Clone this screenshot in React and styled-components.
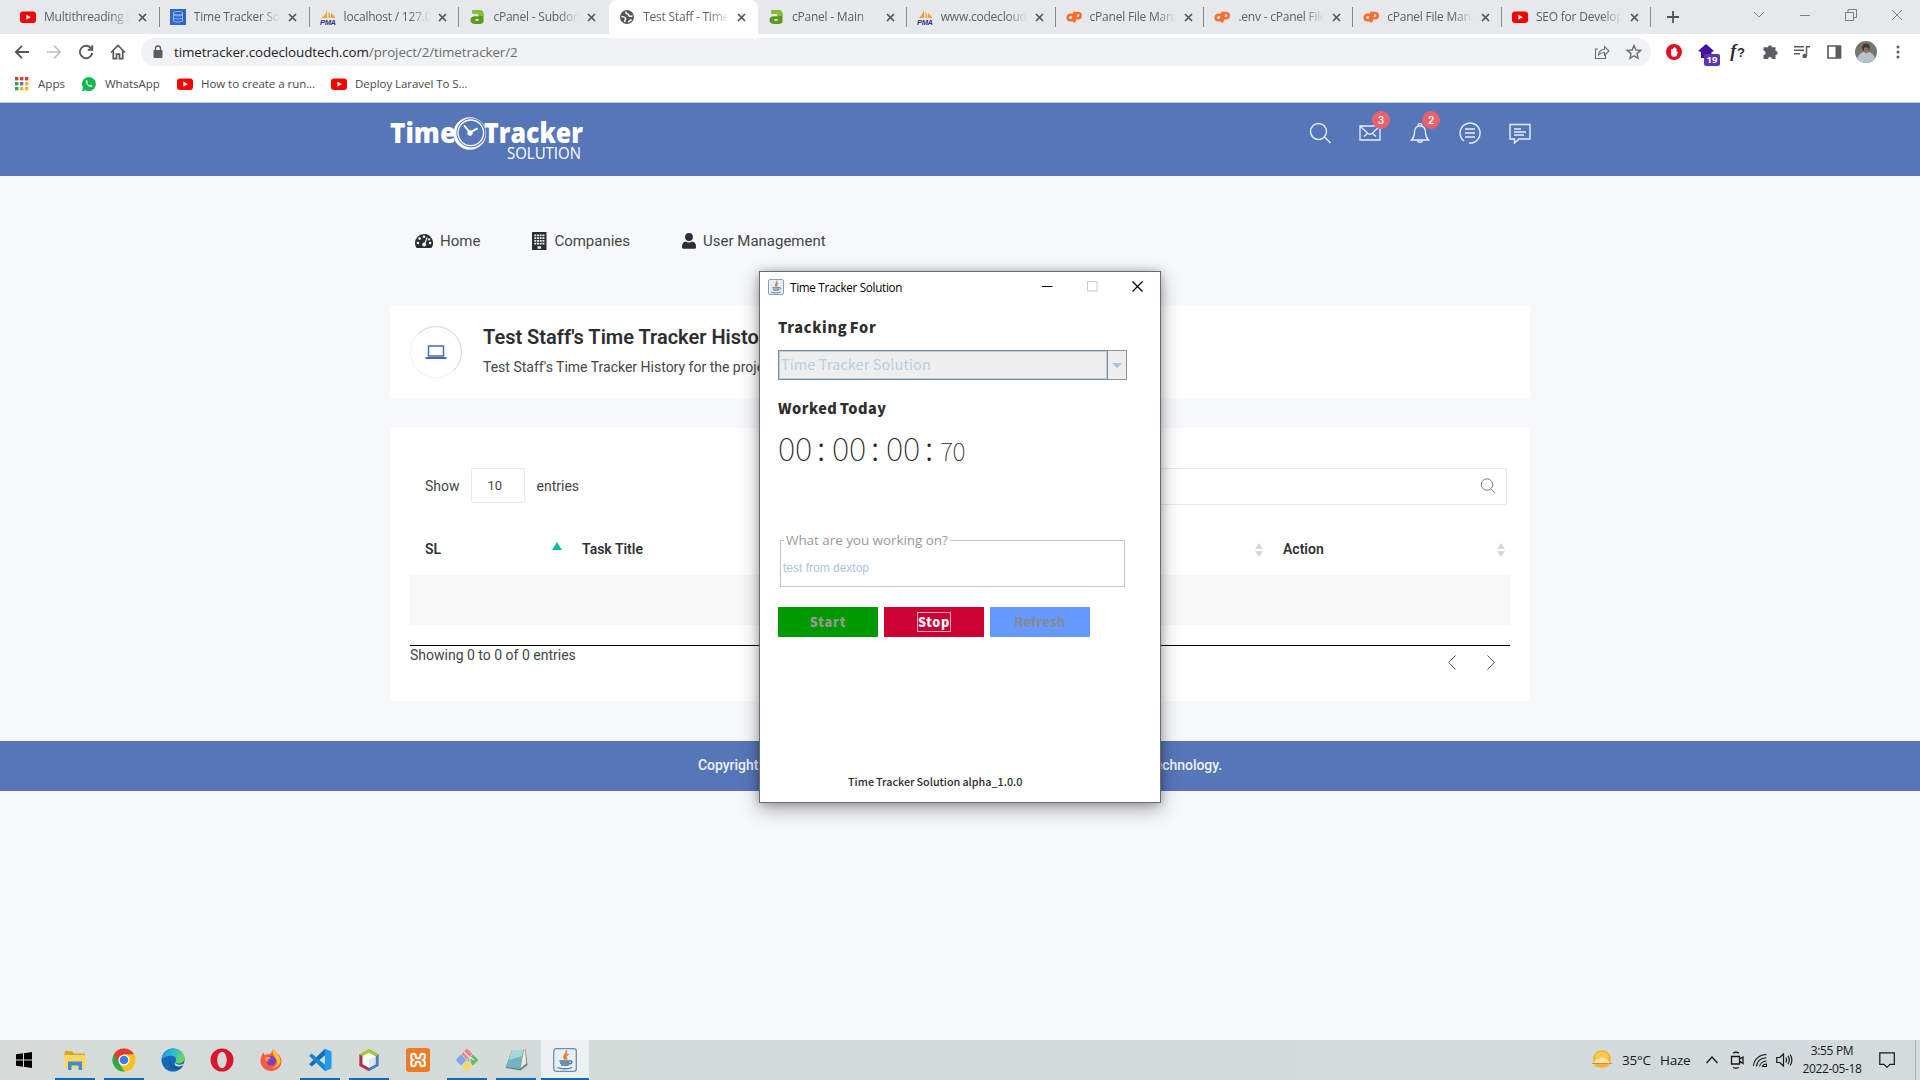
import React from "react";
import styled, { createGlobalStyle, css } from "styled-components";

const Global = createGlobalStyle`
  *, *::before, *::after { box-sizing: border-box; }
  html, body { margin: 0; padding: 0; }
  body { background: #f7f8fa; overflow: hidden; }
  svg { display: block; flex: none; }
`;

const segoe = `"Open Sans", "Noto Sans", sans-serif`;
const source = `"Noto Sans CJK JP", "Noto Sans", sans-serif`;

const Screen = styled.div`
  position: relative;
  width: 1920px;
  height: 1080px;
  display: flex;
  flex-direction: column;
  overflow: hidden;
  background: #f7f8fa;
  font-family: Roboto, sans-serif;
  color: #303134;
`;

/* ---------- browser chrome ---------- */
const TabStrip = styled.div`
  height: 34px;
  flex: none;
  display: flex;
  align-items: stretch;
  padding-left: 10px;
  background: #e6e9ec;
`;
const Tab = styled.div`
  width: ${(p) => p.$w}px;
  display: flex;
  align-items: center;
  padding: 0 9px 0 10px;
  gap: 8px;
  ${(p) =>
    p.$active
      ? css`
          background: #fff;
          border-radius: 8px 8px 0 0;
        `
      : ""}
`;
const Divider = styled.i`
  width: 1px;
  height: 20px;
  align-self: center;
  margin: 0 0 0 -1px;
  background: ${(p) => (p.$hidden ? "transparent" : "#868b90")};
`;
const TabTitle = styled.span`
  width: 86px;
  flex: none;
  overflow: hidden;
  white-space: nowrap;
  font: 12px/20px ${segoe};
  letter-spacing: -0.22px;
  color: #5c6166;
  mask-image: linear-gradient(90deg, #000 66px, transparent 86px);
`;
const Spacer = styled.div`
  flex: 1;
`;
const WindowControls = styled.div`
  display: flex;
  align-items: center;
  height: 29px;
  color: #7b7f83;
  gap: 34px;
  padding-right: 17px;
`;
const NewTab = styled.div`
  width: 44px;
  display: flex;
  align-items: center;
  justify-content: center;
`;

const Toolbar = styled.div`
  height: 36px;
  flex: none;
  display: flex;
  align-items: center;
  background: #fff;
  padding: 0 14px;
  color: #55585b;
`;
const NavButtons = styled.div`
  display: flex;
  gap: 16px;
  margin-right: 15px;
`;
const Omnibox = styled.div`
  width: 1510px;
  height: 28px;
  border-radius: 14px;
  background: #f0f2f4;
  display: flex;
  align-items: center;
  padding: 0 9px 0 12px;
  font: 13.4px/20px ${segoe};
  letter-spacing: -0.09px;
  color: #6a6d71;
`;
const Host = styled.span`
  margin-left: 11px;
  color: #1f2124;
`;
const OmniActions = styled.div`
  margin-left: auto;
  display: flex;
  gap: 16px;
`;
const Extensions = styled.div`
  display: flex;
  align-items: center;
  gap: 16px;
  margin-left: 15px;
`;
const ExtSlot = styled.div`
  position: relative;
  width: 16px;
  height: 22px;
  display: flex;
  align-items: center;
  justify-content: center;
`;
const ExtBadge = styled.span`
  position: absolute;
  left: 6px;
  top: 13px;
  width: 16px;
  height: 12px;
  border-radius: 2px;
  background: #5e35b1;
  color: #fff;
  font: 700 9.5px/12px ${segoe};
  text-align: center;
`;
const FScript = styled.span`
  font: italic 700 18px/20px "Liberation Serif", serif;
  color: #2b2b2b;
  white-space: nowrap;
  letter-spacing: 0.8px;
  & b {
    font: 700 13px/20px "Liberation Sans", sans-serif;
  }
`;
const Bookmarks = styled.div`
  height: 33px;
  flex: none;
  display: flex;
  align-items: center;
  padding: 0 0 5px 14px;
  background: #fff;
  border-bottom: 1px solid #c5d2ec;
`;
const Bookmark = styled.div`
  display: flex;
  align-items: center;
  gap: 8px;
  width: ${(p) => p.$w}px;
  font: 11.5px/16px ${segoe};
  letter-spacing: ${(p) => p.$ls}px;
  white-space: nowrap;
  color: #45484b;
`;

/* ---------- web page ---------- */
const SiteHeader = styled.header`
  height: 73px;
  flex: none;
  background: #5776ba;
`;
const Container = styled.div`
  width: 1140px;
  margin: 0 auto;
  display: flex;
  flex-direction: column;
`;
const HeaderRow = styled.div`
  width: 1140px;
  margin: 0 auto;
  display: flex;
  justify-content: space-between;
`;
const HeaderIcons = styled.div`
  display: flex;
  gap: 28px;
  padding: 19px 0 0;
  margin-right: -1px;
`;
const IconSlot = styled.div`
  position: relative;
  width: 22px;
  height: 22px;
  color: #e6eefc;
`;
const Badge = styled.span`
  position: absolute;
  left: 13px;
  top: -11px;
  width: 18px;
  height: 18px;
  border-radius: 50%;
  background: #e9616b;
  color: #fff;
  font: 600 10px/18px Inter, sans-serif;
  text-align: center;
`;
const SiteNav = styled.nav`
  height: 130px;
  display: flex;
  align-items: center;
  gap: 52px;
  padding-left: 25px;
`;
const NavItem = styled.a`
  display: flex;
  align-items: center;
  gap: 7px;
  font-size: 15px;
  line-height: 20px;
  color: #444648;
`;
const Card = styled.section`
  background: #fff;
`;
const TitleCard = styled(Card)`
  height: 92px;
  display: flex;
  padding: 20px 20px 0;
  gap: 21px;
`;
const CircleIcon = styled.div`
  width: 52px;
  height: 52px;
  border-radius: 50%;
  display: grid;
  place-items: center;
  border: 1px solid #d5d7dc;
  border-left-color: #f2f2f4;
  border-bottom-color: #f2f2f4;
`;
const PageTitle = styled.h1`
  margin: -1px 0 0;
  font-size: 20px;
  line-height: 24px;
  font-weight: 600;
  color: #2c2e31;
  white-space: nowrap;
`;
const PageSub = styled.p`
  margin: 10px 0 0;
  font-size: 14px;
  line-height: 16px;
  color: #444648;
  white-space: nowrap;
`;
const TableCard = styled(Card)`
  margin-top: 30px;
  height: 273px;
  padding: 40px 20px 0 20px;
  font-size: 14px;
`;
const Controls = styled.div`
  display: flex;
  align-items: flex-start;
  justify-content: space-between;
  padding: 0 3px 0 15px;
  height: 73px;
`;
const Length = styled.label`
  height: 35px;
  display: flex;
  align-items: center;
  gap: 11px;
  line-height: 16px;
  color: #444648;
`;
const LengthBox = styled.span`
  width: 54px;
  height: 35px;
  border: 1px solid #e9e9ec;
  border-radius: 2px;
  padding-left: 16px;
  font-size: 13px;
  line-height: 33px;
`;
const Entries = styled.span`
  margin-left: 1px;
`;
const SearchBox = styled.div`
  width: 540px;
  height: 37px;
  border: 1px solid #e9e9ec;
  border-radius: 2px;
  display: flex;
  align-items: center;
  justify-content: flex-end;
  padding: 0 10px 2px 0;
`;
const HeadRow = styled.div`
  height: 34px;
  display: grid;
  grid-template-columns: 157px 701px 242px;
  font-weight: 600;
  line-height: 16px;
  color: #303134;
`;
const Th = styled.div`
  display: flex;
  justify-content: space-between;
  align-items: flex-start;
  padding: 0 ${(p) => p.$right}px 0 15px;
`;
const Sort = styled.span`
  padding-top: ${(p) => p.$top ?? 2}px;
`;
const EmptyRow = styled.div`
  height: 50px;
  background: #f8f8f8;
`;
const TableFoot = styled.div`
  margin-top: 20px;
  border-top: 1px solid #000;
  display: flex;
  justify-content: space-between;
  color: #444648;
  line-height: 18px;
  padding-right: 15px;
`;
const Pager = styled.div`
  display: flex;
  gap: 31px;
  padding-top: 9px;
`;
const SiteFooter = styled.footer`
  height: 50px;
  flex: none;
  margin-top: 40px;
  background: #5776ba;
  color: #eef3fd;
  font-size: 14px;
  font-weight: 500;
  line-height: 48px;
  letter-spacing: -0.03px;
  text-align: center;
`;

/* ---------- desktop tracker window ---------- */
const Dialog = styled.div`
  position: absolute;
  left: 759px;
  top: 271px;
  width: 402px;
  height: 532px;
  background: #fff;
  border: 1px solid #696d71;
  box-shadow: 0 6px 18px rgba(0, 0, 0, 0.34), 0 0 8px rgba(0, 0, 0, 0.2);
  display: flex;
  flex-direction: column;
`;
const DialogBar = styled.div`
  height: 30px;
  display: flex;
  align-items: center;
  padding: 0 17px 0 8px;
  font: 11.7px/20px ${segoe};
  letter-spacing: -0.3px;
  color: #000;
`;
const DialogTitle = styled.span`
  margin-left: 6px;
`;
const DialogControls = styled.div`
  margin-left: auto;
  display: flex;
  align-items: center;
  gap: 34px;
  padding-bottom: 2px;
`;
const DialogBody = styled.div`
  flex: 1;
  display: flex;
  flex-direction: column;
  padding: 15px 0 0 18px;
`;
const Label = styled.div`
  font: 900 14.5px/20px ${source};
  letter-spacing: ${(p) => p.$ls}px;
  word-spacing: -1.5px;
  color: #2e2e30;
  white-space: nowrap;
`;
const Combo = styled.div`
  width: 349px;
  height: 30px;
  margin: 13px 0 18px;
  border: 1px solid #8c959b;
  display: flex;
  background: #eee;
`;
const ComboText = styled.div`
  width: 328px;
  border: 1px solid #b8cfe5;
  outline: 1px solid #7a8a99;
  padding-left: 1px;
  font: 400 14.5px/24px ${source};
  letter-spacing: 0.08px;
  color: #b8cfe5;
`;
const ComboArrow = styled.div`
  flex: 1;
  display: grid;
  place-items: center;
`;
const Timer = styled.div`
  height: 40px;
  margin-top: 9px;
  display: flex;
  align-items: baseline;
  white-space: nowrap;
  color: #2a2a2a;
  font: 100 33px/40px ${source};
`;
const Digits = styled.span`
  width: 38px;
  letter-spacing: -0.3px;
`;
const Colon = styled.span`
  width: 16px;
  padding-left: 1px;
  font-weight: 300;
`;
const Hundredths = styled.span`
  font-size: 25px;
  letter-spacing: -0.6px;
`;
const TaskField = styled.fieldset`
  width: 345px;
  height: 54px;
  margin: 66px 0 0 2px;
  padding: 0 0 0 2px;
  border: 1px solid #b9c9d9;
  min-width: 0;
  font: 12px/14px "Liberation Sans", sans-serif;
  color: #a9c4e2;
`;
const TaskLegend = styled.legend`
  margin-left: 1px;
  padding: 0 2px;
  font: 13.5px/14px ${segoe};
  letter-spacing: -0.06px;
  color: #999;
`;
const TaskText = styled.div`
  padding-top: 14px;
`;
const Buttons = styled.div`
  display: flex;
  gap: 6px;
  margin-top: 20px;
`;
const Button = styled.div`
  width: 100px;
  height: 30px;
  display: grid;
  place-items: center;
  background: ${(p) => p.$bg};
  color: ${(p) => p.$fg};
  font: 900 12.6px/18px ${source};
  letter-spacing: ${(p) => p.$ls ?? 0.9}px;
`;
const FocusRing = styled.span`
  height: 20px;
  line-height: 18px;
  border: 1px solid ${(p) => (p.$on ? "#f0a9bb" : "transparent")};
`;
const Version = styled.div`
  margin: auto 0 13px 70px;
  font: 500 10.8px/16px ${source};
  word-spacing: -0.4px;
  color: #2c2c2e;
  white-space: nowrap;
`;

/* ---------- taskbar ---------- */
const Taskbar = styled.div`
  margin-top: auto;
  height: 40px;
  flex: none;
  display: flex;
  background: linear-gradient(90deg, #d6dbd9, #d2dad9 45%, #d3dbdc 75%, #d5dadd);
`;
const TaskItem = styled.div`
  position: relative;
  width: 49px;
  display: flex;
  align-items: center;
  justify-content: center;
  &::after {
    content: "";
    position: absolute;
    left: 5px;
    right: 4px;
    bottom: 0;
    height: 2px;
    background: ${(p) => (p.$open ? "#0f6cbd" : "transparent")};
  }
`;
const ActiveTask = styled(TaskItem)`
  width: 48px;
  margin-left: 1px;
  background: #eef1f2;
  &::after {
    left: 0;
    right: 0;
  }
`;
const StartButton = styled.div`
  width: 50px;
  display: flex;
  align-items: center;
  padding-left: 16px;
`;
const Tray = styled.div`
  margin-left: auto;
  display: flex;
  align-items: center;
  font: 12px/18px ${segoe};
  color: #16181a;
`;
const Weather = styled.span`
  display: flex;
  gap: 9px;
  width: 82px;
  margin-left: 9px;
  font-size: 13.5px;
  letter-spacing: -0.2px;
`;
const TrayIcons = styled.div`
  display: flex;
  align-items: center;
  gap: 8px;
`;
const Clock = styled.div`
  width: 70px;
  margin-left: 5px;
  padding-right: 2px;
  text-align: center;
  letter-spacing: -0.35px;
  white-space: nowrap;
`;
const Notice = styled.div`
  margin: 0 4px 0 10px;
  width: 38px;
  height: 40px;
  display: flex;
  align-items: center;
  padding-left: 1px;
  border-right: 1px solid #a9afb1;
`;

/* ---------- icons ---------- */
const Svg = ({ w = 16, h = w, vb, children, ...r }) => (
  <svg width={w} height={h} viewBox={vb || `0 0 ${w} ${h}`} fill="none" {...r}>
    {children}
  </svg>
);
const Line = ({ w = 16, h = w, sw = 1.2, d, vb }) => (
  <Svg w={w} h={h} vb={vb} stroke="currentColor" strokeWidth={sw}>
    <path d={d} />
  </Svg>
);
const YouTube = () => (
  <Svg w={16}>
    <rect x="0" y="2.5" width="16" height="11.5" rx="3" fill="#f60000" />
    <path d="M6.4 5.600v5.200l4.400-2.600z" fill="#fff" />
  </Svg>
);
const Docs = () => (
  <Svg w={16}>
    <rect width="16" height="16" fill="#2f66c8" />
    <path d="M3.500 3.200c3-1 6-1 9 0v2c-3 1-6 1-9 0zM3.500 6.200c3 1 6 1 9 0M3.500 9.200c3 1 6 1 9 0M3.500 5v7.200c3 1.200 6 1.200 9 0V5" stroke="#8fb8f8" strokeWidth="1" />
  </Svg>
);
const Pma = () => (
  <Svg w={16}>
    <path d="M7 .8 7.200 9H1.400C4 7.500 6 4.500 7 .8zM8.400 2.500C10 5 10.600 7 10.400 9H8.600zM11 4c2 1.500 3.400 3 4.200 5h-4z" fill="#f6a030" />
    <text x="0" y="15.600" fontFamily="Liberation Sans" fontStyle="italic" fontWeight="700" fontSize="7.500" textLength="16" fill="#33357a">PMA</text>
  </Svg>
);
const GreenA = () => (
  <Svg w={16}>
    <path d="M3.500 1h6.500q4.500 0 4.500 4.500V13q-1 2-3.500 2H6.500q-5 0-5-4 0-3.800 4.500-3.800h3.600V5.800q0-.8-1-.8h-5zM9.600 10H7.400q-1.200 0-1.200.9 0 .9 1.200.9h2.200z" fill="#5c9a1e" fillRule="evenodd" />
    <path d="M3.500 1h6.500q4.500 0 4.500 4.500V7H9.600V5.800q0-.8-1-.8h-5z" fill="#86be3a" />
  </Svg>
);
const Globe = () => (
  <Svg w={16}>
    <circle cx="8" cy="8" r="7" fill="#54585c" />
    <path d="M2.500 7.300C4.300 8.200 6 7.600 6.600 9.200c.4 1.300-1.200 1.600-.8 3.600M7.500 2.500c-1.200 1.400-.6 2.200.8 2.300 1.600.2 1 1.900 2.200 2.400 1.100.5 2-.2 3-.2M9.400 13.400c.2-1.600 2-1.600 3.200-3" stroke="#fff" strokeWidth="1.500" />
  </Svg>
);
const CPanel = () => (
  <Svg w={16} stroke="#ff6c2c" strokeWidth="2.600" strokeLinecap="round" strokeLinejoin="round">
    <path d="M5.800 5.800H4.400a2.700 2.700 0 0 0 0 5.400h2.200L8.400 3.800M8.300 12.400 10.200 4h1.900a2.500 2.500 0 0 1 0 5.200h-1.400" />
  </Svg>
);

const CupIcon = ({ s }) => (
  <Svg w={s} vb="0 0 24 24">
    <rect x=".7" y=".7" width="22.600" height="22.600" rx="2.500" fill="#e6eff6" stroke="#6d8fae" strokeWidth="1.300" />
    <path d="M13 2.500c2.500 3-4.500 4.500-1 9M15.500 6c-3 1.500-3.500 3-1.500 5.500" stroke="#e07a2c" strokeWidth="1.600" />
    <path d="M6.500 13h10M7 15h9.500M8 17h7.500M16.500 13c4-1 3 3-1 3M4.500 19.500c4 1.800 10.500 1.800 14.500 0" stroke="#4a7396" strokeWidth="1.300" />
  </Svg>
);

const Logo = () => (
  <Svg w={196} h={60}>
    <g fill="#fff">
      <text x="0" y="40" fontFamily="Open Sans, sans-serif" fontWeight="800" fontSize="28" textLength="66" lengthAdjust="spacingAndGlyphs">Time</text>
      <text x="94" y="40" fontFamily="Open Sans, sans-serif" fontWeight="800" fontSize="28" textLength="99" lengthAdjust="spacingAndGlyphs">Tracker</text>
      <text x="117" y="56" fontFamily="Open Sans, sans-serif" fontSize="16" textLength="74" lengthAdjust="spacingAndGlyphs">SOLUTION</text>
    </g>
    <circle cx="79.800" cy="30.500" r="16.300" fill="#fff" />
    <circle cx="81" cy="29.800" r="14.600" fill="#5776ba" />
    <circle cx="80.800" cy="29.800" r="12.800" stroke="#fff" strokeWidth="1.300" />
    <path d="M74.500 23l5.500 6.500 7-3.800" stroke="#fff" strokeWidth="1.900" strokeLinecap="round" />
    <circle cx="80" cy="30" r="2.700" fill="#fff" />
  </Svg>
);

const Gauge = () => (
  <Svg w={18} h={16}>
    <path d="M9 1a9 9 0 0 0-9 9c0 1.700.4 3.200 1.200 4.500.2.300.5.500.9.500h13.800c.4 0 .7-.2.900-.5A9 9 0 0 0 9 1z" fill="#2c2e31" />
    <g fill="#f7f8fa">
      <circle cx="9" cy="3.800" r="1.300" /><circle cx="4.600" cy="5.600" r="1.300" /><circle cx="2.900" cy="10" r="1.300" /><circle cx="15.100" cy="10" r="1.300" /><circle cx="14.200" cy="6.400" r="1.100" />
    </g>
    <path d="M12.200 4.500 9.800 10.500" stroke="#f7f8fa" strokeWidth="1.200" />
    <circle cx="9.200" cy="11.500" r="1.900" fill="#f7f8fa" />
  </Svg>
);
const Building = () => (
  <Svg w={15} h={18}>
    <path d="M0 0h14.500v18H0z" fill="#2c2e31" />
    <path d="M2.300 2.600h2v1.700h-2zm2.700 0h2v1.700H5zm2.700 0h2v1.700h-2zm2.700 0h2v1.700h-2zM2.300 5.300h2V7h-2zm2.700 0h2V7H5zm2.700 0h2V7h-2zm2.700 0h2V7h-2zM2.300 8h2v1.700h-2zM5 8h2v1.700H5zm2.700 0h2v1.700h-2zm2.700 0h2v1.700h-2zM2.300 10.700h2v1.700h-2zm2.700 0h2v1.700H5zm2.700 0h2v1.700h-2zm2.700 0h2v1.700h-2zM5.500 14.200h3.600v2.600H5.500z" fill="#e9eaec" />
  </Svg>
);
const Person = () => (
  <Svg w={14} h={16}>
    <circle cx="7" cy="4" r="3.900" fill="#2c2e31" />
    <path d="M3.800 8.500c2 1.200 4.400 1.200 6.400 0C12.500 8.800 14 10.400 14 13v1.300c0 .9-.6 1.500-1.500 1.500h-11C.6 15.800 0 15.200 0 14.300V13c0-2.600 1.500-4.200 3.800-4.500z" fill="#2c2e31" />
  </Svg>
);

/* taskbar icons */
const StartIcon = () => (
  <Svg w={16}><path d="M0 2.300 7 1.300v6.200H0zM8 1.200 16 0v7.500H8zM0 8.500h7v6.200l-7-1zM8 8.500h8V16l-8-1.200z" fill="#000" /></Svg>
);
const Explorer = () => (
  <Svg w={24}>
    <path d="M1.500 4.500Q1.500 3 3 3h6l2 2.500h11V9H1.500z" fill="#d8a520" />
    <path d="M1.500 7h21v13.500h-21z" fill="#fbd661" />
    <path d="M5 13.500h14V22h-3.500v-4.500h-7V22H5z" fill="#3a8ed8" />
  </Svg>
);
const Chrome = () => (
  <Svg w={24}>
    <circle cx="12" cy="12" r="11.500" fill="#fbc116" />
    <path d="M2 6.300h10L7 15l5.500 8.500A11.500 11.500 0 0 1 2 6.300z" fill="#2da94f" />
    <path d="M2 6.300A11.500 11.500 0 0 1 22 6.300H12L7 15z" fill="#e33b2e" />
    <circle cx="12" cy="12" r="5.600" fill="#fff" /><circle cx="12" cy="12" r="4.300" fill="#3b7de8" />
  </Svg>
);
const Edge = () => (
  <Svg w={24}>
    <defs>
      <linearGradient id="edgeTop" x1="0" y1="0" x2="1" y2=".4"><stop stopColor="#1c8ad8" /><stop offset=".6" stopColor="#2fc2cf" /><stop offset="1" stopColor="#6bd35a" /></linearGradient>
    </defs>
    <circle cx="12" cy="12" r="11.500" fill="#1668b8" />
    <path d="M.5 12C1 5 6 .5 12.200.5 19 .5 23.500 5.500 23.500 10c0 3.600-2.800 5.600-5.800 5.600-2.200 0-3.700-.8-3.400-1.500 2-2.600.2-6.400-3.800-6.400C5.500 7.700 1.500 9.500.5 12z" fill="url(#edgeTop)" />
    <path d="M9 11.500c-1.600 4 1 9.300 6.800 9.300 2.600 0 4.700-.9 6-2.300-1.800.8-3.200 1-5 1-4.400 0-7.500-3.200-7.800-8z" fill="#12509c" />
    <path d="M14 14.500c1 2.500 5.500 3 9.500.7-1 2.300-3.300 3.200-6 3.200-3 0-4.500-2-3.500-3.900z" fill="#d5dbdb" />
  </Svg>
);
const Opera = () => (
  <Svg w={24}><path fillRule="evenodd" d="M12 .5a11.500 11.500 0 1 1 0 23 11.500 11.500 0 0 1 0-23zm0 3.300c-2.800 0-4.700 3.700-4.700 8.200s1.900 8.200 4.700 8.200 4.700-3.700 4.700-8.200S14.800 3.800 12 3.800z" fill="#d9172c" /></Svg>
);
const Firefox = () => (
  <Svg w={24}>
    <path d="M14 1c2 1.500 3 3 3.400 4.500C20 6 22.800 10 22.500 14c-.5 5.500-5 9-10.500 9S1.500 18.500 1.500 13c0-3.500 1-6.500 3-8.500l1 2.800C7.500 6 9 6 10.500 6.500 12 5 14 3.500 14 1z" fill="#fb5a3c" />
    <path d="M14 1c2 1.500 3 3 3.400 4.500 3 2 4.600 5 4 9-2 4-5 5.500-8 5.500 4-2 5.500-5 4-8.500C16 8.500 13 7 14 1z" fill="#ffc530" />
    <circle cx="12.200" cy="12.800" r="4.800" fill="#7b3fd0" /><path d="M6 10c2-2 5-1.500 6 .5-2 0-3.500 1-3 3-2 .5-3.500-1-3-3.500z" fill="#ff9f2e" />
  </Svg>
);
const VsCode = () => (
  <Svg w={24}>
    <path d="M17 .8 23.500 3.500v17L17 23.200z" fill="#1f9cf0" />
    <path d="M17 .8v6.500L3.800 18.500 1 16.200z" fill="#0f6fb8" /><path d="M17 23.200v-6.500L3.800 5.500 1 7.800z" fill="#1787d3" />
  </Svg>
);
const NetBeans = () => (
  <Svg w={24}>
    <path d="M12 .8 21.700 6v12L12 23.200 2.300 18V6z" fill="#fff" />
    <path d="M2.300 6 12 .8 21.700 6 18.500 8.200 12 4.700 5.500 8.200z" fill="#a9c534" />
    <path d="M2.300 6l3.200 2.200v8L12 19.800v3.400L2.300 18z" fill="#b5304c" /><path d="M21.700 6l-3.200 2.200v8L12 19.800v3.400L21.700 18z" fill="#4a7fc0" />
    <path d="M12 11.500l6.500-3.300v8L12 19.800z" fill="#dfe5ea" />
  </Svg>
);
const Xampp = () => (
  <Svg w={24}>
    <rect width="24" height="24" rx="3" fill="#ee7a24" />
    <path d="M12 10.300c-1.300 0-2.300-.3-2.300-1.800V8c0-1.400-1-2.200-2.300-2.200S5.200 6.700 5.200 8v1.500c0 1.200.6 2 1.600 2.500-1 .5-1.600 1.300-1.600 2.500V16c0 1.300.9 2.200 2.200 2.200S9.700 17.400 9.700 16v-.5c0-1.500 1-1.800 2.300-1.800s2.300.3 2.300 1.800v.5c0 1.400 1 2.200 2.300 2.200s2.200-.9 2.200-2.200v-1.500c0-1.200-.6-2-1.600-2.500 1-.5 1.600-1.300 1.600-2.500V8c0-1.300-.9-2.200-2.200-2.200S14.300 6.600 14.300 8v.5c0 1.500-1 1.800-2.300 1.800z" stroke="#fff" strokeWidth="2.100" />
  </Svg>
);
const GitIcon = () => (
  <Svg w={24}>
    <path d="M12 .5 17.500 6 12 11.500 6.500 6z" fill="#ee8384" /><path d="M6 6.500 11.500 12 6 17.500.5 12z" fill="#7fa8ea" />
    <path d="M18 6.500 23.500 12 18 17.500 12.500 12z" fill="#64bb6a" /><path d="M12 12.500 17.500 18 12 23.500 6.500 18z" fill="#f5d66a" />
    <path d="M9 4l6 6v5M15 9l4 3" stroke="#dfe8e6" strokeWidth="1.200" />
  </Svg>
);
const NotepadIcon = () => (
  <Svg w={24}>
    <path d="M8 2h13.500l2 15-7 5.500L2 20z" fill="#5b7e86" /><path d="M8 2h11.500L16 21 1.500 19z" fill="#74b4c2" /><path d="M8 2h11.500l-1.300 6L5 12z" fill="#a9d6de" /><path d="M19.500 2h2l1 13.500L16 21z" fill="#ecebe3" stroke="#8b8b80" strokeWidth=".6" />
  </Svg>
);

const tabs = [
  ["Multithreading in", YouTube],
  ["Time Tracker Solution", Docs],
  ["localhost / 127.0.0.1", Pma],
  ["cPanel - Subdomains", GreenA],
  ["Test Staff - Time Tr", Globe],
  ["cPanel - Main", GreenA],
  ["www.codecloudtech", Pma],
  ["cPanel File Manager", CPanel],
  [".env - cPanel File M", CPanel],
  ["cPanel File Manager", CPanel],
  ["SEO for Developers", YouTube],
];

const apps = [
  [Explorer, true], [Chrome, true], [Edge], [Opera], [Firefox], [VsCode, true],
  [NetBeans, true], [Xampp], [GitIcon, true], [NotepadIcon, true],
];

const SortIcon = ({ active }) => (
  <Svg w={active ? 10 : 8} h={14}>
    {active ? (
      <path d="M0 8 5 0l5 8z" fill="#12bd92" />
    ) : (
      <path d="M0 6 4 0l4 6zM0 8h8l-4 6z" fill="#d6d6d9" />
    )}
  </Svg>
);

export default function App() {
  return (
    <Screen>
      <Global />
      <TabStrip>
        {tabs.map(([t, Icon], i) => (
          <React.Fragment key={i}>
            <Tab $active={i === 4} $w={i < 4 ? 149.8 : 148.8}>
              <Icon />
              <TabTitle>{t}</TabTitle>
              <Svg w={9} stroke="#505458" strokeWidth="1.700"><path d="M1 1l7 7M8 1 1 8" /></Svg>
            </Tab>
            <Divider $hidden={i === 3 || i === 4} />
          </React.Fragment>
        ))}
        <NewTab><Svg w={12} stroke="#505458" strokeWidth="1.800"><path d="M6 0v12M0 6h12" /></Svg></NewTab>
        <Spacer />
        <WindowControls>
          <Line w={12} sw={1} d="M1 3l5 5 5-5" />
          <Line w={12} sw={1} d="M1 6.500h10" />
          <Line w={12} sw={1} d="M.5 3.500h8v8h-8zM3 3.500v-3h8.500v8H9" />
          <Line w={12} sw={1} d="M1 1l10 10M11 1 1 11" />
        </WindowControls>
      </TabStrip>

      <Toolbar>
        <NavButtons>
          <Line sw={1.800} d="M15 8H2M8 1.800 1.800 8 8 14.200" />
          <Svg stroke="#bbbdc0" strokeWidth="1.600"><path d="M1 8h13M8 1.800 14.200 8 8 14.200" /></Svg>
          <Line sw={1.900} d="M13.200 4.500A6.200 6.200 0 1 0 14.200 9M14.300 1.200v4.500H9.800" />
          <Line sw={1.700} d="M1 8.500 8 1.500l7 7M3.300 7v7.700h3.200v-4.500h3v4.500h3.200V7" />
        </NavButtons>
        <Omnibox>
          <Svg w={10} h={14}>
            <rect x=".5" y="5" width="9" height="8" rx="1" fill="#585b5f" />
            <path d="M2.500 6V3.500a2.500 2.500 0 0 1 5 0V6" stroke="#585b5f" strokeWidth="1.300" />
          </Svg>
          <Host>timetracker.codecloudtech.com</Host>/project/2/timetracker/2
          <OmniActions>
            <Line sw={1.100} d="M4 5H1.500v9.500h10V11M4.500 11c.5-4 3-5.500 6-5.500V2.500L15 7l-4.500 4.200V8.500c-3 0-4.500.7-6 2.500z" />
            <Line sw={1.400} d="M8 1.500 9.900 6l4.800.4-3.700 3.200 1.100 4.700L8 11.800l-4.100 2.500L5 9.600 1.300 6.400 6.100 6z" />
          </OmniActions>
        </Omnibox>
        <Extensions>
          <ExtSlot>
            <Svg><circle cx="8" cy="8" r="8" fill="#e01020" /><path d="M5 5.500v4c0 2 1.200 3.500 3 3.500s3-1 3.300-3l.7-2.500-1.400.4V4.500H9.400V3H8.200v1H6.900v1z" fill="#fff" /></Svg>
          </ExtSlot>
          <ExtSlot>
            <Svg><path d="M8 0l8 7-2.500 1v6H3V8L0 7z" fill="#4410a3" /></Svg>
            <ExtBadge>19</ExtBadge>
          </ExtSlot>
          <ExtSlot><FScript>f<b>?</b></FScript></ExtSlot>
          <ExtSlot>
            <Svg><path d="M6 3.200a2 2 0 0 1 4 0h3.500v3.600a2 2 0 0 1 0 4.200v4H10a2 2 0 0 0-4 0H1.500v-4a2 2 0 0 0 0-4.200V3.200z" fill="#5a5d61" /></Svg>
          </ExtSlot>
          <ExtSlot>
            <Svg stroke="#5a5d61" strokeWidth="1.500"><path d="M0 2.800h10M0 6.300h10M0 9.800h6M12.500 12V2.800H16" /><circle cx="10.700" cy="12" r="1.600" fill="#5a5d61" /></Svg>
          </ExtSlot>
          <ExtSlot>
            <Svg w={15} h={14}><path d="M1 1h12.500v12H1z" stroke="#5a5d61" strokeWidth="1.700" /><path d="M8.500 1h5v12h-5z" fill="#5a5d61" /></Svg>
          </ExtSlot>
          <ExtSlot>
            <Svg w={22}>
              <circle cx="11" cy="11" r="11" fill="#70776f" /><path d="M2 17q3-5 6-6h6q4 1 6 6-3.500 5-9 5T2 17z" fill="#b5c2cd" />
              <circle cx="11" cy="6.500" r="3.800" fill="#453029" /><path d="M9 6.500h4.500V11l-2 1.500L9 11z" fill="#966a56" />
            </Svg>
          </ExtSlot>
          <ExtSlot>
            <Svg><g fill="#5a5d61"><circle cx="8" cy="3" r="1.500" /><circle cx="8" cy="8" r="1.500" /><circle cx="8" cy="13" r="1.500" /></g></Svg>
          </ExtSlot>
        </Extensions>
      </Toolbar>

      <Bookmarks>
        <Bookmark $w={67} $ls={0.05}>
          <Svg>
            {["#d93f35", "#d93f35", "#d93f35", "#2ea24c", "#3b7de8", "#f2b51c", "#2ea24c", "#f2b51c", "#f2b51c"].map((c, i) => (
              <rect key={i} x={1 + (i % 3) * 5} y={1 + Math.floor(i / 3) * 5} width="3.400" height="3.400" fill={c} />
            ))}
          </Svg>
          Apps
        </Bookmark>
        <Bookmark $w={96} $ls={-0.02}>
          <Svg>
            <path d="M8 1a7 7 0 1 1-3.400 13.200L1 15.200l1-3.600A7 7 0 0 1 8 1z" fill="#12b84c" />
            <path d="M5.200 4.500c-1 1.500.5 4 2 5.300 1.500 1.200 3.200 1.700 4.100.6.600-1-1.600-2-2-1.800l-.8.800c-1.200-.6-1.900-1.300-2.400-2.400l.7-.8c.100-.7-.8-2.600-1.600-1.700z" fill="#fff" />
          </Svg>
          WhatsApp
        </Bookmark>
        <Bookmark $w={154} $ls={-0.05}><YouTube />How to create a run...</Bookmark>
        <Bookmark $w={160} $ls={-0.05}><YouTube />Deploy Laravel To S...</Bookmark>
      </Bookmarks>

      <SiteHeader>
        <HeaderRow>
          <Logo />
          <HeaderIcons>
            <IconSlot><Line w={22} sw={1.400} d="M17.500 9.500a8 8 0 1 1-16 0 8 8 0 0 1 16 0zM15.500 15l6 6" /></IconSlot>
            <IconSlot>
              <Line w={22} sw={1.300} d="M1 4h20v14H1zM1.500 4.500 9 11.500q2 1.500 4 0l7.500-7M5 14.500l4-3.500M17 14.500 13 11" />
              <Badge>3</Badge>
            </IconSlot>
            <IconSlot>
              <Line w={22} sw={1.300} d="M2.500 18c2-2 3-4 3-7.500 0-4 2-6.500 5.500-6.500s5.500 2.500 5.500 6.500c0 3.500 1 5.500 3 7.500zM8.500 18.500c.5 2.300 4.500 2.300 5 0M9 3.500c0-2.500 4-2.500 4 0" />
              <Badge>2</Badge>
            </IconSlot>
            <IconSlot>
              <Line w={22} sw={1.400} d="M5 19a10 10 0 1 1 5 2M6 7h10M6 11h10M6 15h10" />
            </IconSlot>
            <IconSlot>
              <Line w={22} sw={1.400} d="M1 2.500h20v14.500H10l-4.500 4V17H1zM5 7h7M5 10h12M5 13h10" />
            </IconSlot>
          </HeaderIcons>
        </HeaderRow>
      </SiteHeader>

      <Container>
        <SiteNav>
          <NavItem><Gauge />Home</NavItem>
          <NavItem><Building />Companies</NavItem>
          <NavItem><Person />User Management</NavItem>
        </SiteNav>
        <TitleCard>
          <CircleIcon>
            <Svg w={22} h={16} stroke="#4a68b8" strokeWidth="1.500"><path d="M3.500 2h15v10h-15z" /><path d="M.5 14h21" strokeWidth="2" /></Svg>
          </CircleIcon>
          <div>
            <PageTitle>Test Staff's Time Tracker History</PageTitle>
            <PageSub>Test Staff's Time Tracker History for the project</PageSub>
          </div>
        </TitleCard>
        <TableCard>
          <Controls>
            <Length>Show<LengthBox>10</LengthBox><Entries>entries</Entries></Length>
            <SearchBox>
              <Svg w={16} stroke="#77797c" strokeWidth="1"><circle cx="7" cy="6.500" r="5.700" /><path d="M11 10.800l4.200 4.200" /></Svg>
            </SearchBox>
          </Controls>
          <HeadRow>
            <Th $right={5}>SL<Sort $top={1}><SortIcon active /></Sort></Th>
            <Th $right={5}>Task Title<Sort><SortIcon /></Sort></Th>
            <Th $right={5}>Action<Sort><SortIcon /></Sort></Th>
          </HeadRow>
          <EmptyRow />
          <TableFoot>
            Showing 0 to 0 of 0 entries
            <Pager>
              <Svg w={8} h={15} stroke="#4c4e51"><path d="M7.500.5.700 7.500l6.800 7" /></Svg>
              <Svg w={8} h={15} stroke="#4c4e51"><path d="M.5.500l6.800 7-6.800 7" /></Svg>
            </Pager>
          </TableFoot>
        </TableCard>
      </Container>
      <SiteFooter>Copyright © 2022 Time Tracker Solution All rights reserved. Code Cloud Technology.</SiteFooter>

      <Taskbar>
        <StartButton><StartIcon /></StartButton>
        {apps.map(([Icon, open], i) => (
          <TaskItem key={i} $open={open}><Icon /></TaskItem>
        ))}
        <ActiveTask $open><CupIcon s={24} /></ActiveTask>
        <Tray>
          <Svg w={22}>
            <circle cx="11" cy="10" r="9" fill="#f7b32b" /><circle cx="11" cy="9" r="6.500" fill="#fbcb4a" />
            <path d="M3 14h15a3 3 0 0 0-3-3.500 4 4 0 0 0-7-.5c-3-.5-4.500 1.500-5 4z" fill="#fbe3b4" /><path d="M1 14.500h20" stroke="#d98d1c" /><path d="M3 17h14" stroke="#ecae4a" />
          </Svg>
          <Weather><span>35°C</span><span>Haze</span></Weather>
          <TrayIcons>
            <Line sw={1.400} d="M2.500 11 8 5l5.500 6" />
            <Line w={16} h={18} sw={1.300} d="M3.500 5.500h8v7.500h-8zM11.500 8 15 6v6.500L11.500 10M5 2q3-1.500 6 0M5 16.500q3 1.500 6 0" />
            <Line sw={1.100} d="M1.500 14C2 7 8 2.500 14.500 2.500M4.500 14.500C5 9 9 6 14.500 5.700M7.500 14.500C8 11.500 11 9.200 14.500 9M10.500 14.500c.5-1.500 2-2.500 4-2.500v2.500z" />
            <Line w={17} h={16} sw={1.200} d="M.8 5.500h3L7.500 2v12L3.800 10.500h-3zM9.800 5.500q1.500 2.500 0 5M12 3.800q2.600 4.200 0 8.400M14.200 2.500q3.400 5.500 0 11" />
          </TrayIcons>
          <Clock>3:55 PM<br />2022-05-18</Clock>
          <Notice>
            <Line w={16} h={16} sw={1.200} d="M.8.800h14.500v11.500H11l-3 3-3-3H.8z" />
          </Notice>
        </Tray>
      </Taskbar>

      <Dialog>
        <DialogBar>
          <CupIcon s={16} />
          <DialogTitle>Time Tracker Solution</DialogTitle>
          <DialogControls>
            <Line w={11} sw={1} d="M0 5.500h10.500" />
            <Svg w={11} stroke="#ccc"><path d="M.5.500h9.500v9.500H.5z" /></Svg>
            <Line w={11} sw={1.200} d="M.5.500l10 10M10.500.500l-10 10" />
          </DialogControls>
        </DialogBar>
        <DialogBody>
          <Label $ls={0.7}>Tracking For</Label>
          <Combo>
            <ComboText>Time Tracker Solution</ComboText>
            <ComboArrow><Svg w={10} h={5}><path d="M0 0h10L5 5z" fill="#a9c1da" /></Svg></ComboArrow>
          </Combo>
          <Label $ls={0.5}>Worked Today</Label>
          <Timer>
            <Digits>00</Digits><Colon>:</Colon>
            <Digits>00</Digits><Colon>:</Colon>
            <Digits>00</Digits><Colon>:</Colon>
            <Hundredths>70</Hundredths>
          </Timer>
          <TaskField>
            <TaskLegend>What are you working on?</TaskLegend>
            <TaskText>test from dextop</TaskText>
          </TaskField>
          <Buttons>
            <Button $bg="#009900" $fg="#9a9a93"><FocusRing>Start</FocusRing></Button>
            <Button $bg="#cc0033" $fg="#fff" $ls={0.7}><FocusRing $on>Stop</FocusRing></Button>
            <Button $bg="#6699ff" $fg="#858b98" $ls={0.3}><FocusRing>Refresh</FocusRing></Button>
          </Buttons>
          <Version>Time Tracker Solution alpha_1.0.0</Version>
        </DialogBody>
      </Dialog>
    </Screen>
  );
}
